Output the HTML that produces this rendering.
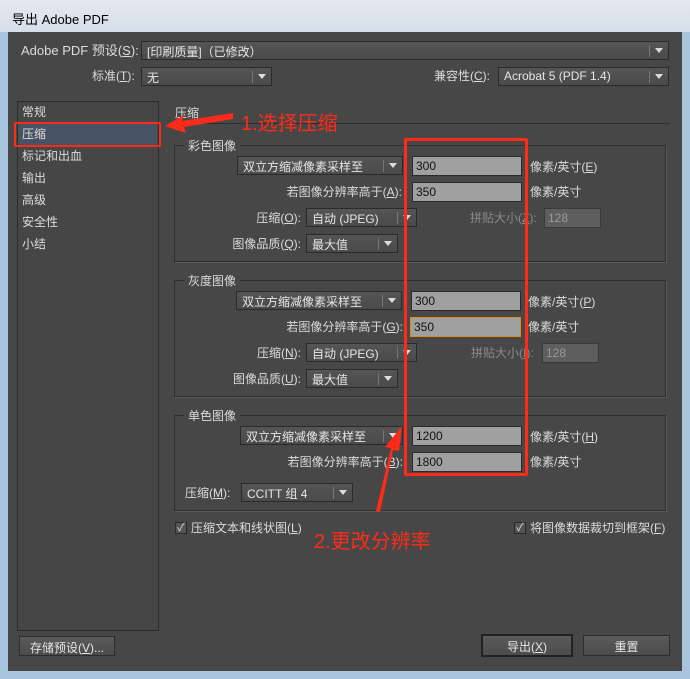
<!DOCTYPE html>
<html><head><meta charset="utf-8"><style>
*{margin:0;padding:0;box-sizing:border-box}
body{width:690px;height:679px;overflow:hidden;background:#a9c4de;font-family:"Liberation Sans","Noto Sans CJK SC",sans-serif;font-size:12px;color:#dcdcdc;position:relative}
.a{position:absolute;white-space:nowrap}
.title{left:0;top:0;width:690px;height:32px;background:linear-gradient(#e4e9ef,#d6dee8);color:#000;font-size:13px;padding:9px 0 0 12px}
.main{left:8px;top:32px;width:674px;height:639px;background:#474747}
.dd{position:absolute;height:19px;border:1px solid #2a2a2a;background:linear-gradient(#555,#4a4a4a);color:#e6e6e6;padding:1px 0 0 5px;font-size:12px}
.dd::after{content:"";position:absolute;right:5px;top:6px;border-left:4px solid transparent;border-right:4px solid transparent;border-top:5px solid #ddd}
.dd::before{content:"";position:absolute;right:18px;top:3px;width:1px;height:12px;background:#777}
.in{position:absolute;height:20px;background:#a0a0a0;border:1px solid #2a2a2a;color:#111;padding:2px 0 0 3px;font-size:12px}
.in.dis{background:#5e5e5e;color:#999;border-color:#3a3a3a}
.grp{position:absolute;border:1px solid #2e2e2e;box-shadow:1px 1px 0 #5a5a5a}
.gt{position:absolute;background:#474747;padding:0 4px;color:#dcdcdc}
.r{text-align:right}
.btn{position:absolute;border:1px solid #2c2c2c;background:linear-gradient(#5a5a5a,#4c4c4c);text-align:center;color:#e6e6e6;padding-top:3px}
.red{color:#ff2a1a;font-size:20px}
.cb{position:absolute;width:12px;height:12px;border:1px solid #2a2a2a;background:#555;color:#ddd;font-size:11px;line-height:10px;text-align:center}
</style></head><body>
<div class="a title">导出 Adobe PDF</div>
<div class="a main"></div>

<div class="a" style="left:21px;top:40px;font-size:13px">Adobe PDF 预设(<u>S</u>):</div>
<div class="dd" style="left:141px;top:41px;width:528px">[印刷质量]（已修改）</div>
<div class="a" style="left:92px;top:67px">标准(<u>T</u>):</div>
<div class="dd" style="left:141px;top:67px;width:131px">无</div>
<div class="a" style="left:434px;top:67px">兼容性(<u>C</u>):</div>
<div class="dd" style="left:498px;top:67px;width:171px">Acrobat 5 (PDF 1.4)</div>

<div class="a" style="left:17px;top:101px;width:142px;height:530px;border:1px solid #2c2c2c;background:#464646"></div>
<div class="a" style="left:18px;top:124px;width:139px;height:21px;background:#465364"></div>
<div class="a" style="left:14px;top:122px;width:147px;height:25px;border:2px solid #ff2a1a;border-radius:2px"></div>
<div class="a" style="left:22px;top:101px;line-height:22px">常规<br>压缩<br>标记和出血<br>输出<br>高级<br>安全性<br>小结</div>

<div class="a" style="left:175px;top:104px">压缩</div>
<div class="a" style="left:170px;top:123px;width:500px;height:1px;background:#2e2e2e"></div>

<!-- color -->
<div class="grp" style="left:174px;top:145px;width:492px;height:117px"></div>
<div class="gt" style="left:184px;top:137px">彩色图像</div>
<div class="dd" style="left:237px;top:156px;width:166px">双立方缩减像素采样至</div>
<div class="in" style="left:412px;top:156px;width:110px">300</div>
<div class="a" style="left:530px;top:158px">像素/英寸(<u>E</u>)</div>
<div class="a r" style="left:240px;top:183px;width:162px">若图像分辨率高于(<u>A</u>):</div>
<div class="in" style="left:412px;top:182px;width:110px">350</div>
<div class="a" style="left:530px;top:183px">像素/英寸</div>
<div class="a r" style="left:200px;top:209px;width:101px">压缩(<u>O</u>):</div>
<div class="dd" style="left:306px;top:208px;width:111px">自动 (JPEG)</div>
<div class="a" style="left:470px;top:209px;color:#8a8a8a">拼贴大小(<u>Z</u>):</div>
<div class="in dis" style="left:544px;top:208px;width:57px">128</div>
<div class="a r" style="left:200px;top:235px;width:101px">图像品质(<u>Q</u>):</div>
<div class="dd" style="left:306px;top:234px;width:92px">最大值</div>

<!-- gray -->
<div class="grp" style="left:174px;top:280px;width:492px;height:117px"></div>
<div class="gt" style="left:184px;top:272px">灰度图像</div>
<div class="dd" style="left:236px;top:291px;width:166px">双立方缩减像素采样至</div>
<div class="in" style="left:411px;top:291px;width:110px">300</div>
<div class="a" style="left:528px;top:293px">像素/英寸(<u>P</u>)</div>
<div class="a r" style="left:240px;top:318px;width:163px">若图像分辨率高于(<u>G</u>):</div>
<div class="in" style="left:410px;top:317px;width:111px;border-color:#e08a20">350</div>
<div class="a" style="left:528px;top:318px">像素/英寸</div>
<div class="a r" style="left:200px;top:344px;width:101px">压缩(<u>N</u>):</div>
<div class="dd" style="left:306px;top:343px;width:111px">自动 (JPEG)</div>
<div class="a" style="left:471px;top:344px;color:#8a8a8a">拼贴大小(<u>I</u>):</div>
<div class="in dis" style="left:542px;top:343px;width:57px">128</div>
<div class="a r" style="left:200px;top:370px;width:101px">图像品质(<u>U</u>):</div>
<div class="dd" style="left:306px;top:369px;width:92px">最大值</div>

<!-- mono -->
<div class="grp" style="left:174px;top:415px;width:492px;height:96px"></div>
<div class="gt" style="left:184px;top:407px">单色图像</div>
<div class="dd" style="left:240px;top:426px;width:163px">双立方缩减像素采样至</div>
<div class="in" style="left:412px;top:426px;width:110px">1200</div>
<div class="a" style="left:530px;top:428px">像素/英寸(<u>H</u>)</div>
<div class="a r" style="left:240px;top:453px;width:163px">若图像分辨率高于(<u>B</u>):</div>
<div class="in" style="left:412px;top:452px;width:110px">1800</div>
<div class="a" style="left:530px;top:453px">像素/英寸</div>
<div class="a" style="left:185px;top:484px">压缩(<u>M</u>):</div>
<div class="dd" style="left:241px;top:483px;width:112px">CCITT 组 4</div>

<div class="cb" style="left:175px;top:522px">✓</div>
<div class="a" style="left:191px;top:519px">压缩文本和线状图(<u>L</u>)</div>
<div class="cb" style="left:514px;top:522px">✓</div>
<div class="a" style="left:530px;top:519px">将图像数据裁切到框架(<u>F</u>)</div>

<div class="btn" style="left:19px;top:636px;width:96px;height:20px;padding-top:2px">存储预设(<u>V</u>)...</div>
<div class="btn" style="left:481px;top:634px;width:92px;height:23px;border:2px solid #222;padding-top:2px">导出(<u>X</u>)</div>
<div class="btn" style="left:583px;top:635px;width:87px;height:21px;padding-top:2px">重置</div>

<div class="a" style="left:404px;top:138px;width:124px;height:338px;border:3px solid #ff2a1a;border-radius:2px"></div>
<div class="a red" style="left:241px;top:107px">1.选择压缩</div>
<div class="a red" style="left:314px;top:525px">2.更改分辨率</div>
<svg class="a" style="left:0;top:0" width="690" height="679">
<polygon points="233,113 182,121 184,115 165,126 186,133 184,127 233,119" fill="#ff2a1a"/>
<polygon points="376,511 391,448 385,447 402,426 399,451 393,450 380,512" fill="#ff2a1a"/>
</svg>
</body></html>
